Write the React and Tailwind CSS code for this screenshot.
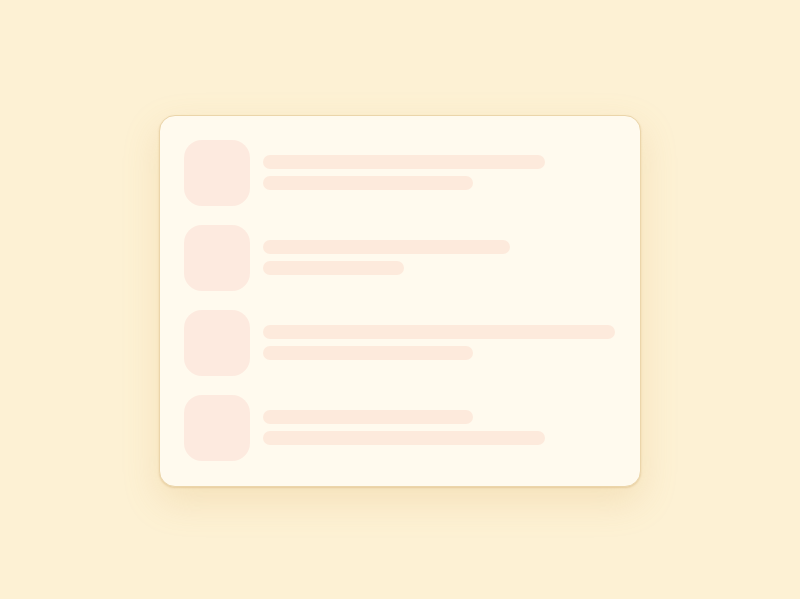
import React from 'react';

const rows = [
  { a: 282, b: 210 },
  { a: 247, b: 141 },
  { a: 352, b: 210 },
  { a: 210, b: 282 },
];

const App = () => {
  return (
    <div className="w-[800px] h-[599px] bg-[#fdf1d4] flex items-center justify-center">
      <div className="w-[482px] h-[372px] mt-[2px] mr-[1px] rounded-[16px] border border-[#ebd5aa] bg-[#fffaee] shadow-[0_1px_2px_rgba(190,140,60,0.28),0_14px_36px_rgba(214,170,90,0.22)] pt-[24px] pl-[24px] flex flex-col gap-[19px]">
        {rows.map((r, i) => (
          <div key={i} className="flex items-center gap-[13px] blur-[0.7px]">
            <div className="w-[66px] h-[66px] rounded-[18px] bg-[#fdeadf] shrink-0" />
            <div className="flex flex-col gap-[7px]">
              <div className="h-[14px] rounded-full bg-[#fdeadc]" style={{ width: r.a }} />
              <div className="h-[14px] rounded-full bg-[#fdeadc]" style={{ width: r.b }} />
            </div>
          </div>
        ))}
      </div>
    </div>
  );
};

export default App;
